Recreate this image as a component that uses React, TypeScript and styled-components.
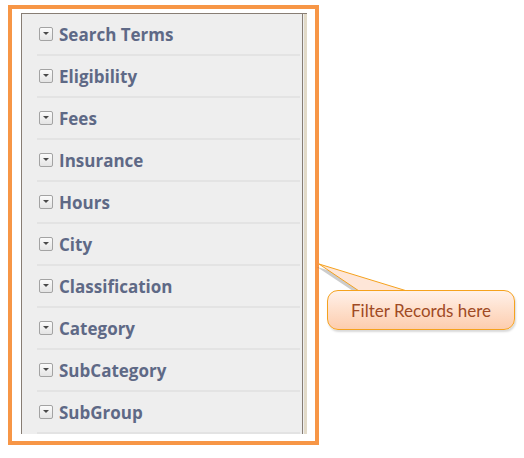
import styled, { createGlobalStyle } from "styled-components";
import * as React from "react";

const GlobalStyle = createGlobalStyle`
  html, body {
    margin: 0;
    padding: 0;
    background: #ffffff;
  }
  body {
    font-family: "Open Sans", "Liberation Sans", sans-serif;
  }
`;

const Page = styled.div`
  position: relative;
  width: 524px;
  height: 458px;
  padding: 5px 0 0 8px;
  box-sizing: border-box;
`;

const Frame = styled.div`
  width: 311px;
  height: 440px;
  box-sizing: border-box;
  border: 4px solid #f79646;
  padding: 4px 8px 0 9px;
`;

const Panel = styled.div`
  display: flex;
  border-top: 1px solid #877d74;
  border-left: 1px solid #877d74;
  background: #eeeeee;
`;

const List = styled.div`
  flex: 1;
  padding: 0 2px 0 15px;
  border-right: 1px solid #877d74;
`;

const Track = styled.div`
  width: 4px;
  background: linear-gradient(to right, #efefef 1px, #e2dac8 1px);
`;

const Row = styled.div`
  display: flex;
  align-items: center;
  gap: 6px;
  height: 40px;
  padding-left: 2px;
  border-bottom: 2px solid #e3e3e3;
`;

const Toggle = styled.span`
  display: flex;
  align-items: center;
  justify-content: center;
  width: 12px;
  height: 12px;
  border: 1px solid #a3a3a3;
  border-radius: 2px;
  background: linear-gradient(#fbfbfb, #e4e4e4);
  margin-top: -1px;

  &::after {
    content: "";
    border-left: 3px solid transparent;
    border-right: 3px solid transparent;
    border-top: 3px solid #4a4a4a;
  }
`;

const Label = styled.span`
  font-size: 17px;
  font-weight: 700;
  color: #5e6986;
  margin-top: 1px;
`;

const Callout = styled.div`
  position: absolute;
  left: 327px;
  top: 290px;
  width: 188px;
  height: 40px;
  box-sizing: border-box;
  border: 1px solid #f5a21e;
  border-radius: 11px;
  background: linear-gradient(#fff1e9, #fdcdae);
  box-shadow: 1px 2px 2px rgba(0, 0, 0, 0.15);
  display: flex;
  align-items: center;
  justify-content: center;
  font-family: Lato, "Open Sans", sans-serif;
  font-size: 17px;
  color: #a04a24;
`;

const Tail = styled.svg`
  position: absolute;
  left: 316px;
  top: 260px;
  overflow: visible;
`;

const sections = [
  "Search Terms",
  "Eligibility",
  "Fees",
  "Insurance",
  "Hours",
  "City",
  "Classification",
  "Category",
  "SubCategory",
  "SubGroup",
];

const App: React.FC = () => {
  return (
    <Page>
      <GlobalStyle />
      <Frame>
        <Panel>
          <List>
            {sections.map((name) => (
              <Row key={name}>
                <Toggle />
                <Label>{name}</Label>
              </Row>
            ))}
          </List>
          <Track />
        </Panel>
      </Frame>
      <Tail width="100" height="40">
        <polygon points="2,6 41,32 91,32" fill="rgba(0,0,0,0.2)" transform="translate(-1,1)" />
        <polygon points="3,4 43,31 91,31" fill="#fee6d8" stroke="#f5a21e" strokeWidth="1" strokeLinejoin="round" />
      </Tail>
      <Callout>Filter Records here</Callout>
      <Tail width="100" height="40" style={{ zIndex: 1 }}>
        <polygon points="43.5,31 90.5,31 90.5,33 43.5,33" fill="#fff1e9" />
      </Tail>
    </Page>
  );
};

export default App;
